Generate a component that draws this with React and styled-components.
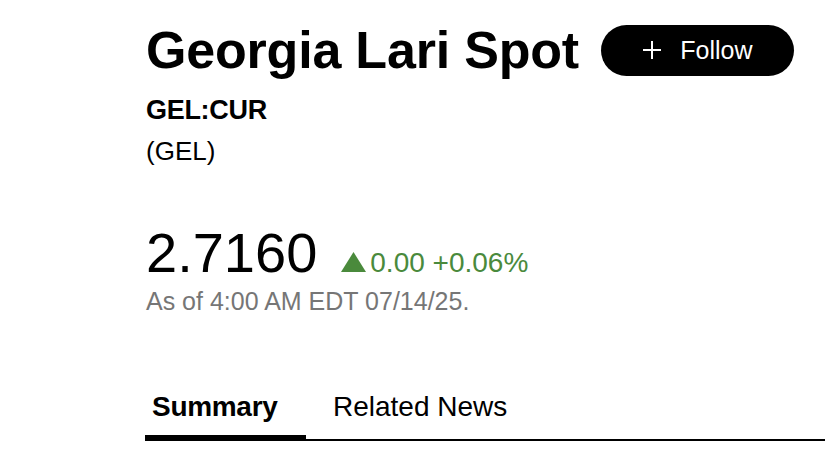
import React from 'react'
import styled, { createGlobalStyle } from 'styled-components';

const GlobalStyle = createGlobalStyle`
    body {
        margin: 0;
        background: #fff;
        font-family: "Liberation Sans", Arial, Helvetica, sans-serif;
        color: #000;
    }
`;

const Container = styled.div`
    width: 825px;
    height: 465px;
    overflow: hidden;
    padding-top: 24px;
    box-sizing: border-box;
`;

const Header = styled.div`
    padding-left: 146px;
`;

const TitleRow = styled.div`
    display: flex;
    align-items: center;
    gap: 22px;
`;

const Title = styled.h1`
    margin: 0;
    font-size: 52px;
    font-weight: 700;
    letter-spacing: -0.2px;
    line-height: 52px;
`;

const FollowButton = styled.button`
    display: flex;
    align-items: center;
    justify-content: center;
    gap: 18px;
    width: 193px;
    height: 51px;
    border: none;
    border-radius: 26px;
    background: #000;
    color: #fff;
    font-family: inherit;
    font-size: 25px;
    font-weight: 500;
    cursor: pointer;
`;

const Ticker = styled.div`
    margin-top: 18px;
    font-size: 27px;
    line-height: 32px;
    font-weight: 700;
    letter-spacing: -0.3px;
`;

const Currency = styled.div`
    margin-top: 9px;
    font-size: 26px;
    line-height: 32px;
`;

const PriceRow = styled.div`
    display: flex;
    align-items: baseline;
    gap: 24px;
    margin-top: 58px;
    height: 56px;
`;

const Price = styled.span`
    font-size: 56px;
    line-height: 56px;
`;

const Change = styled.span`
    display: flex;
    align-items: baseline;
    gap: 4px;
    color: #4a8a3c;
    font-size: 28px;
`;

const Arrow = styled.svg`
    width: 25px;
    height: 20px;
`;

const Stamp = styled.div`
    margin-top: 5px;
    font-size: 25px;
    line-height: 30px;
    color: #767676;
`;

const Tabs = styled.div`
    display: flex;
    margin: 75px 0 0 145px;
    border-bottom: 2px solid #000;
`;

const Tab = styled.div`
    font-size: 28px;
    line-height: 32px;
    font-weight: ${props => props.active ? 700 : 400};
    width: ${props => props.width}px;
    box-sizing: border-box;
    padding: 0 0 12px ${props => props.pad}px;
    margin-bottom: -2px;
    border-bottom: 6px solid ${props => props.active ? '#000' : 'transparent'};
    letter-spacing: ${props => props.active ? '-0.3px' : '0'};
`;

const App = () => {
  return (
    <Container>
        <GlobalStyle/>
        <Header>
            <TitleRow>
                <Title>Georgia Lari Spot</Title>
                <FollowButton>
                    <svg width="20" height="20" viewBox="0 0 20 20">
                        <path d="M10 1v18M1 10h18" stroke="#fff" strokeWidth="2"/>
                    </svg>
                    Follow
                </FollowButton>
            </TitleRow>
            <Ticker>GEL:CUR</Ticker>
            <Currency>(GEL)</Currency>
            <PriceRow>
                <Price>2.7160</Price>
                <Change>
                    <Arrow viewBox="0 0 25 20">
                        <polygon points="12.5,0 25,20 0,20" fill="#4a8a3c"/>
                    </Arrow>
                    0.00 +0.06%
                </Change>
            </PriceRow>
            <Stamp>As of 4:00 AM EDT 07/14/25.</Stamp>
        </Header>
        <Tabs>
            <Tab active width={161} pad={7}>Summary</Tab>
            <Tab width={250} pad={27}>Related News</Tab>
        </Tabs>
    </Container>
  )
}

export default App
